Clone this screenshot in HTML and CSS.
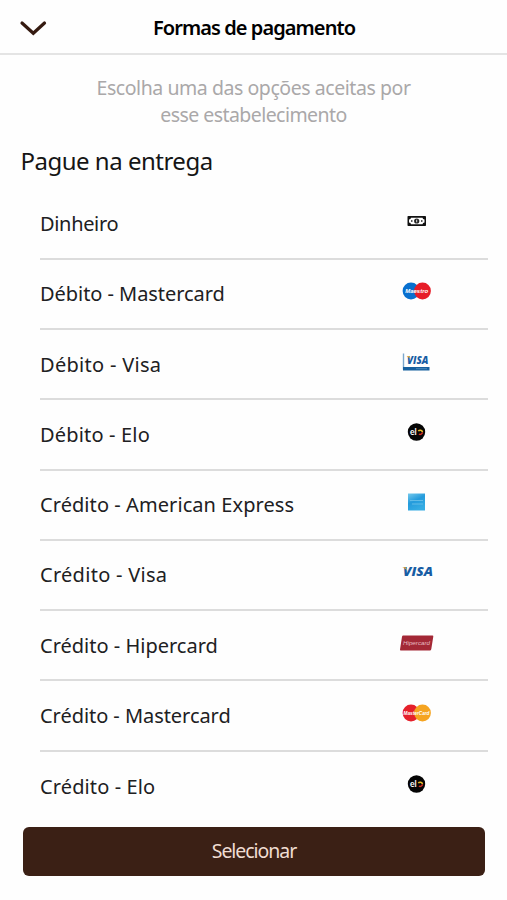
FILE: index.html
```html
<!DOCTYPE html>
<html lang="pt-BR">
<head>
<meta charset="utf-8">
<title>Formas de pagamento</title>
<link rel="stylesheet" href="styles.css">
</head>
<body>
<header class="topbar">
  <svg class="back" viewBox="0 0 28 18"><path d="M3 4 L14.300 14.300 L25.500 4" fill="none" stroke="#351a10" stroke-width="3.200" stroke-linecap="round"/></svg>
  <h1 class="title">Formas de pagamento</h1>
</header>
<main>
  <p class="intro"><span class="line-a">Escolha uma das opções aceitas por</span><br><span class="line-b">esse estabelecimento</span></p>
  <h2 class="section">Pague na entrega</h2>
  <ul class="list">
    <li class="row"><span class="name n-di">Dinheiro</span>
      <svg class="icon" viewBox="0 0 44 24"><rect x="12.500" y="7" width="18.500" height="10" rx=".8" fill="#111"/><path d="M16 8.700h11.500a2 2 0 0 0 2 1.800v3a2 2 0 0 0-2 1.800H16a2 2 0 0 0-2-1.800v-3a2 2 0 0 0 2-1.800z" fill="#fff"/><circle cx="21.700" cy="12" r="2.600" fill="#222"/><path d="M21.700 10.700v2.600" stroke="#ddd"/><path d="M16 12h1.500M26 12h1.500" stroke="#222" stroke-width="1.500"/></svg></li>
    <li class="row"><span class="name n-dm">Débito - Mastercard</span>
      <svg class="icon" viewBox="0 0 44 24"><circle cx="16" cy="12" r="8.400" fill="#0870cf"/><circle cx="27.500" cy="12" r="8.400" fill="#e71d28"/><text x="10.200" y="14" textLength="23" lengthAdjust="spacingAndGlyphs" class="mark bold">Maestro</text></svg></li>
    <li class="row"><span class="name n-dv">Débito - Visa</span>
      <svg class="icon" viewBox="0 0 44 24"><path d="M8.500 3.500v16" stroke="#7ba7cd" stroke-width="1.400"/><path d="M8 17h26.500v3.500H8z" fill="#16609f"/><path d="M21 18.700h11" stroke="#4d89b7"/><text x="12" y="14" textLength="21.500" lengthAdjust="spacingAndGlyphs" class="visa small">VISA</text><path d="M11.500 6h2.800l1 2.400z" fill="#e5ad38"/></svg></li>
    <li class="row"><span class="name n-de">Débito - Elo</span>
      <svg class="icon" viewBox="0 0 44 24"><circle cx="21.500" cy="12" r="8.700" fill="#050505"/><text x="15" y="14.700" class="elo">el</text><path d="M23.300 11.200a2.300 2.300 0 0 1 4.200.9" fill="none" stroke="#e8bd28" stroke-width="1.500"/><path d="M27.500 12.300a2.300 2.300 0 0 1-3.600 1.700" fill="none" stroke="#d82d25" stroke-width="1.500"/></svg></li>
    <li class="row"><span class="name n-ca">Crédito - American Express</span>
      <svg class="icon" viewBox="0 0 44 24"><defs><linearGradient id="amex" x2=".5" y2="1"><stop stop-color="#75c9ec"/><stop offset=".5" stop-color="#249bdc"/><stop offset="1" stop-color="#35ace3"/></linearGradient></defs><path d="M13 3.500h17v17H13z" fill="url(#amex)"/><path d="M15 10.500h13M17 14h11" stroke="#62bce7" stroke-width="1.200"/></svg></li>
    <li class="row"><span class="name n-cv">Crédito - Visa</span>
      <svg class="icon" viewBox="0 0 44 24"><text x="8" y="16.300" textLength="30" lengthAdjust="spacingAndGlyphs" class="visa">VISA</text><path d="M7 7.300h3.800l1.500 3.500C11 9 9 8 7 7.300z" fill="#e5a932"/></svg></li>
    <li class="row"><span class="name n-ch">Crédito - Hipercard</span>
      <svg class="icon" viewBox="0 0 44 24"><path d="M8.200 4.500h29.300q1 0 .8 1L36.300 18q-.2 1.500-1.500 1.500H5.800q-1 0-.8-1L7 5.700q.2-1.200 1.200-1.200z" fill="#a32836"/><text x="8" y="14" textLength="27" lengthAdjust="spacingAndGlyphs" class="mark hiper">Hipercard</text></svg></li>
    <li class="row"><span class="name n-cm">Crédito - Mastercard</span>
      <svg class="icon" viewBox="0 0 44 24"><circle cx="16" cy="12" r="8.400" fill="#e5202b"/><circle cx="27.500" cy="12" r="8.400" fill="#f5a421"/><text x="8.500" y="14" textLength="26" lengthAdjust="spacingAndGlyphs" class="mark bold">MasterCard</text></svg></li>
    <li class="row"><span class="name n-ce">Crédito - Elo</span>
      <svg class="icon" viewBox="0 0 44 24"><circle cx="21.500" cy="12" r="8.700" fill="#050505"/><text x="15" y="14.700" class="elo">el</text><path d="M23.300 11.200a2.300 2.300 0 0 1 4.200.9" fill="none" stroke="#e8bd28" stroke-width="1.500"/><path d="M27.500 12.300a2.300 2.300 0 0 1-3.600 1.700" fill="none" stroke="#d82d25" stroke-width="1.500"/></svg></li>
  </ul>
</main>
<button class="select">Selecionar</button>
</body>
</html>
```
FILE: styles.css
```css
* { box-sizing: border-box; }
body { margin: 0; height: 900px; background: #fefefe; color: #202022; font-family: "Noto Sans", "Open Sans", sans-serif; display: flex; flex-direction: column; overflow: hidden; }
.topbar { height: 55px; flex: none; border-bottom: 2px solid #e4e4e4; display: grid; grid-template-columns: 60px 1fr 60px; align-items: center; padding-top: 3px; }
.back { width: 28px; height: 18px; margin-left: 19px; }
.title { margin: 0 0 0 1px; text-align: center; color: #000; font-size: 20px; line-height: 28px; font-weight: 600; letter-spacing: -.92px; white-space: nowrap; }
main { flex: none; }
.intro { margin: 19px 0 0; text-align: center; color: #aaa8a9; font-size: 19.500px; line-height: 27px; white-space: nowrap; }
.line-a { letter-spacing: -.44px; }
.line-b { letter-spacing: -.55px; }
.section { margin: 15px 0 0 20.500px; height: 36px; line-height: 36px; font-size: 24px; font-weight: 400; letter-spacing: -.5px; color: #151515; }
.list { list-style: none; margin: 10.600px 19px 0 40px; padding: 0; }
.row { height: 70.250px; border-bottom: 2px solid #dcdcdc; display: flex; align-items: center; justify-content: space-between; }
.row:last-child { border-bottom: 0; }
.name { font-size: 20px; line-height: 28px; white-space: nowrap; padding-top: 1px; }
.n-di { letter-spacing: -.33px; }
.n-dm { letter-spacing: -.05px; }
.n-dv { letter-spacing: .3px; }
.n-de { letter-spacing: .17px; }
.n-ca { letter-spacing: .07px; }
.n-cv { letter-spacing: .28px; }
.n-cm { letter-spacing: -.05px; }
.n-ce { letter-spacing: .12px; }
.icon { width: 44px; height: 24px; flex: none; margin: 0 49px 5px 0; }
.mark { font: 5.500px "Liberation Sans", sans-serif; fill: #fff; }
.bold { font-weight: 700; font-style: italic; }
.hiper { font-style: italic; fill: #e6bbc0; }
.visa { font: italic 800 12.500px "Open Sans", sans-serif; fill: #185da4; }
.small { font-size: 11px; }
.elo { font: 700 8.500px Lato, sans-serif; fill: #fff; }
.select { flex: none; width: 462px; height: 49px; margin: 5px 0 0 23px; border: 0; border-radius: 6px; background: #3b2015; color: #f0ddd3; font-family: inherit; font-size: 19.500px; line-height: 28px; letter-spacing: -1.050px; }
```
